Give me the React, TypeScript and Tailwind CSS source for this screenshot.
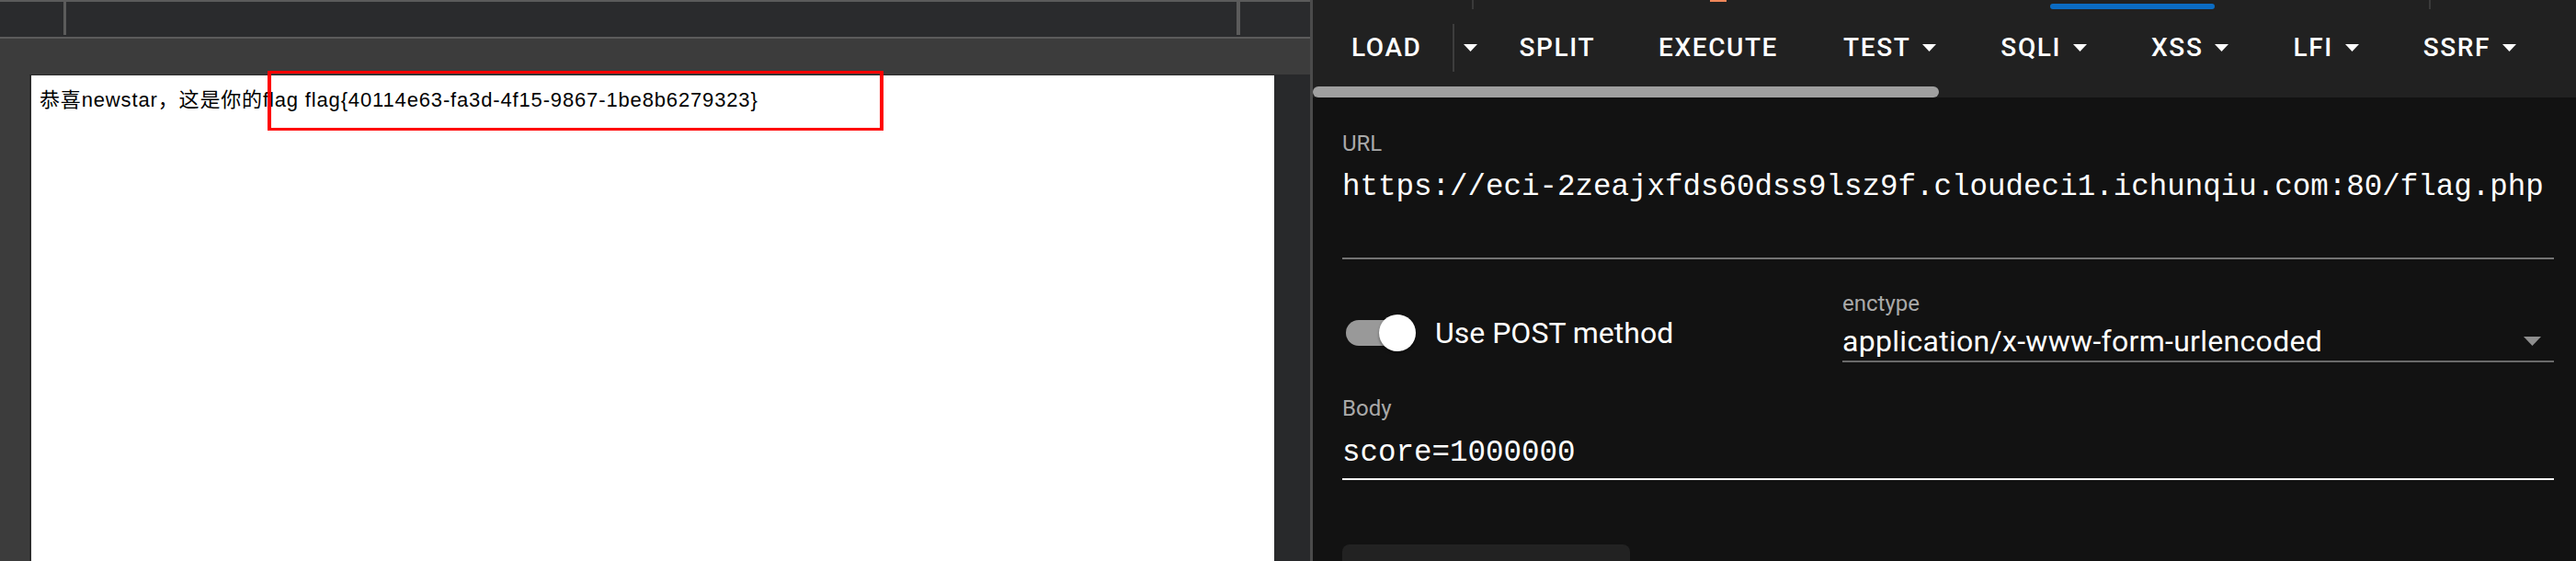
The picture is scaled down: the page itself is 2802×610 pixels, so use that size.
import { ReactNode } from 'react';

const tools = [
  { label: 'LOAD', caret: false, gap: 'ml-0' },
  { label: 'SPLIT', caret: false, gap: 'ml-[46px]' },
  { label: 'EXECUTE', caret: false, gap: 'ml-[69px]' },
  { label: 'TEST', caret: true, gap: 'ml-[71px]' },
  { label: 'SQLI', caret: true, gap: 'ml-[70px]' },
  { label: 'XSS', caret: true, gap: 'ml-[70px]' },
  { label: 'LFI', caret: true, gap: 'ml-[70px]' },
  { label: 'SSRF', caret: true, gap: 'ml-[70px]' },
];

function Caret({ className = '', color = '#ffffff' }: { className?: string; color?: string }) {
  return (
    <svg width="15" height="8" viewBox="0 0 15 8" className={className}>
      <polygon points="0,0 15,0 7.5,8" fill={color} />
    </svg>
  );
}

function ToolItem({ label, caret, gap }: { label: string; caret: boolean; gap: string }) {
  return (
    <div className={`flex items-center ${gap}`}>
      <span className="font-['Roboto',sans-serif] font-medium text-[28px] leading-[28px] tracking-[1.6px] text-white">
        {label}
      </span>
      {caret && <Caret className="ml-[13px]" />}
      {label === 'LOAD' && (
        <>
          <div className="ml-[33px] w-[2px] h-[52px] bg-[#3d3d3d]" />
          <Caret className="ml-[10px]" />
        </>
      )}
    </div>
  );
}

function Label({ children, className = '' }: { children: ReactNode; className?: string }) {
  return (
    <div className={`font-['Roboto',sans-serif] text-[24px] leading-[24px] text-[#a9a9a9] ${className}`}>
      {children}
    </div>
  );
}

function LeftPane() {
  return (
    <div className="relative w-[1425px] h-full flex flex-col">
      <div className="h-[2px] bg-[#5b5b5b]" />
      <div className="h-[38px] bg-[#2a2b2d] flex">
        <div className="ml-[69px] w-[3px] h-[36px] bg-[#5b5b5b]" />
        <div className="ml-[1273px] w-[4px] h-[36px] bg-[#5b5b5b]" />
      </div>
      <div className="h-[2px] bg-[#5b5b5b]" />
      <div className="h-[39px] bg-[#3c3c3c]" />
      <div className="flex-1 flex">
        <div className="w-[32px] bg-[#3c3c3c]" />
        <div className="w-[1354px] bg-white border-l-2 border-t border-[#2b2b2b] pl-[9px] pt-[14px]">
          <p className="font-['Liberation_Sans','Noto_Sans_CJK_SC',sans-serif] text-[22px] leading-[26px] tracking-[0.85px] text-black">
            恭喜newstar，这是你的flag flag{'{'}40114e63-fa3d-4f15-9867-1be8b6279323{'}'}
          </p>
        </div>
        <div className="flex-1 bg-[#28292b]" />
      </div>
      {/* red annotation box drawn over the page */}
      <div className="absolute left-[291px] top-[77px] w-[670px] h-[65px] border-y-[3px] border-x-4 border-[#ff0000]" />
    </div>
  );
}

function RightPane() {
  return (
    <div className="flex-1 h-full flex flex-col bg-[#121212]">
      <div className="bg-[#212121]">
        <div className="h-[10px] flex items-start">
          <div className="ml-[173px] w-[2px] h-[10px] bg-[#3a3a3a]" />
          <div className="ml-[257px] w-[18px] h-[2px] bg-[#f0875a]" />
          <div className="ml-[352px] mt-[4px] w-[179px] h-[6px] rounded-full bg-[#0b6bc2]" />
          <div className="ml-[233px] w-[2px] h-[10px] bg-[#3a3a3a]" />
        </div>
        <div className="h-[84px] flex items-center pl-[42px]">
          {tools.map((t) => (
            <ToolItem key={t.label} {...t} />
          ))}
        </div>
        <div className="h-[12px]">
          <div className="w-[681px] h-full rounded-full bg-[#a0a0a0]" />
        </div>
      </div>

      <div className="flex-1 pl-[32px] pr-[24px] pt-[38px]">
        <Label>URL</Label>
        <div className="mt-[16px] font-['Liberation_Mono',monospace] text-[32.5px] leading-[40px] text-white whitespace-nowrap">
          https://eci-2zeajxfds60dss9lsz9f.cloudeci1.ichunqiu.com:80/flag.php
        </div>
        <div className="mt-[56px] h-[2px] bg-[#737373]" />

        <div className="flex">
          <div className="w-[544px] mt-[60px] h-[40px] flex items-center">
            <div className="relative w-[80px] h-[40px] flex items-center">
              <div className="ml-[4px] w-[63px] h-[28px] rounded-full bg-[#999999]" />
              <div className="absolute left-[40px] top-0 w-[40px] h-[40px] rounded-full bg-white shadow-[0_2px_3px_rgba(0,0,0,0.4)]" />
            </div>
            <span className="ml-[21px] font-['Roboto',sans-serif] text-[32px] leading-[40px] text-white">
              Use POST method
            </span>
          </div>
          <div className="flex-1 pt-[36px]">
            <Label>enctype</Label>
            <div className="mt-[11px] flex items-center justify-between border-b-2 border-[#6a6a6a] pb-[3px]">
              <span className="font-['Roboto',sans-serif] text-[32px] leading-[36px] tracking-[0.3px] text-white">
                application/x-www-form-urlencoded
              </span>
              <svg width="19" height="10" viewBox="0 0 19 10" className="mr-[14px]">
                <polygon points="0,0 19,0 9.5,10" fill="#8e8e8e" />
              </svg>
            </div>
          </div>
        </div>

        <Label className="mt-[38px]">Body</Label>
        <div className="mt-[17px] font-['Liberation_Mono',monospace] text-[32.5px] leading-[40px] text-white">
          score=1000000
        </div>
        <div className="mt-[7px] h-[2px] bg-white" />

        <div className="mt-[70px] w-[313px] h-[40px] rounded-[8px] bg-[#222222]" />
      </div>
    </div>
  );
}

export default function App() {
  return (
    <div className="w-[2802px] h-[610px] flex overflow-hidden bg-[#121212]">
      <LeftPane />
      <div className="w-[3px] h-full bg-[#4b4b4b]" />
      <RightPane />
    </div>
  );
}
